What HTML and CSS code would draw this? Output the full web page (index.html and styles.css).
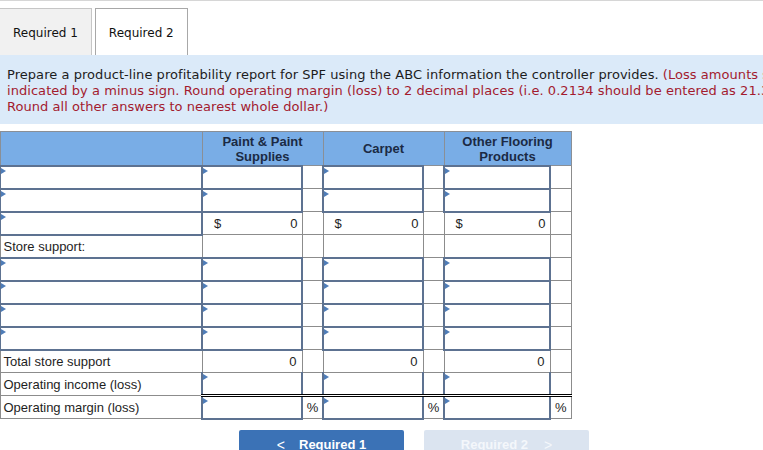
FILE: index.html
```html
<!DOCTYPE html>
<html>
<head>
<meta charset="utf-8">
<link rel="stylesheet" href="styles.css">
</head>
<body>
<div class="page">
  <div class="tabs">
    <div class="tab">Required 1</div>
    <div class="tab active">Required 2</div>
  </div>
  <div class="instr">
    Prepare a product-line profitability report for SPF using the ABC information the controller provides. <span class="red">(Loss amounts should be<br>indicated by a minus sign. Round operating margin (loss) to 2 decimal places (i.e. 0.2134 should be entered as 21.34).<br>Round all other answers to nearest whole dollar.)</span>
  </div>
  <table class="grid">
    <colgroup>
      <col class="c-label"><col class="c-val"><col class="c-s"><col class="c-val"><col class="c-s"><col class="c-val2"><col class="c-s">
    </colgroup>
    <thead>
      <tr>
        <th></th>
        <th colspan="2">Paint &amp; Paint<br>Supplies</th>
        <th colspan="2">Carpet</th>
        <th colspan="2">Other Flooring<br>Products</th>
      </tr>
    </thead>
    <tbody>
      <tr>
        <td class="in"></td>
        <td class="in"></td><td></td>
        <td class="in"></td><td></td>
        <td class="in"></td><td></td>
      </tr>
      <tr>
        <td class="in"></td>
        <td class="in"></td><td></td>
        <td class="in"></td><td></td>
        <td class="in"></td><td></td>
      </tr>
      <tr class="sum">
        <td class="in"></td>
        <td><div class="money"><span>$</span><span>0</span></div></td><td></td>
        <td><div class="money"><span>$</span><span>0</span></div></td><td></td>
        <td><div class="money"><span>$</span><span>0</span></div></td><td></td>
      </tr>
      <tr>
        <td class="lbl">Store support:</td>
        <td></td><td></td><td></td><td></td><td></td><td></td>
      </tr>
      <tr>
        <td class="in"></td>
        <td class="in"></td><td></td>
        <td class="in"></td><td></td>
        <td class="in"></td><td></td>
      </tr>
      <tr>
        <td class="in"></td>
        <td class="in"></td><td></td>
        <td class="in"></td><td></td>
        <td class="in"></td><td></td>
      </tr>
      <tr>
        <td class="in"></td>
        <td class="in"></td><td></td>
        <td class="in"></td><td></td>
        <td class="in"></td><td></td>
      </tr>
      <tr>
        <td class="in"></td>
        <td class="in"></td><td></td>
        <td class="in"></td><td></td>
        <td class="in"></td><td></td>
      </tr>
      <tr class="sum">
        <td class="lbl">Total store support</td>
        <td class="num">0</td><td></td>
        <td class="num">0</td><td></td>
        <td class="num">0</td><td></td>
      </tr>
      <tr class="sum">
        <td class="lbl">Operating income (loss)</td>
        <td class="in"></td><td></td>
        <td class="in"></td><td></td>
        <td class="in"></td><td></td>
      </tr>
      <tr class="dbl">
        <td class="lbl">Operating margin (loss)</td>
        <td class="in"></td><td class="pct">%</td>
        <td class="in"></td><td class="pct">%</td>
        <td class="in"></td><td class="pct">%</td>
      </tr>
    </tbody>
  </table>
  <div class="nav">
    <div class="btn prev"><span class="chev">&lt;</span>Required 1</div>
    <div class="btn next">Required 2<span class="chev">&gt;</span></div>
  </div>
</div>
</body>
</html>
```

FILE: styles.css
```css
html, body {
  margin: 0;
  padding: 0;
  background: #fff;
  overflow: hidden;
}
.page {
  width: 828px;
  border-top: 1px solid #d6d6d6;
  font-family: "DejaVu Sans", Verdana, sans-serif;
}
.tabs {
  display: flex;
  gap: 3px;
  padding-top: 7px;
  margin-left: -1px;
}
.tab {
  box-sizing: border-box;
  height: 47px;
  padding: 1px 13px 0 13px;
  display: flex;
  align-items: center;
  font-size: 12px;
  color: #111;
  background: #f1f1f1;
  border: 1px solid #c6c6c6;
  border-bottom: none;
}
.tab.active {
  background: #fff;
  border-color: #a8a8a8;
  width: 93px;
}
.instr {
  background: #dbeaf9;
  padding: 12px 7px 9px 7px;
  font-size: 13px;
  line-height: 16px;
  color: #1d1d1d;
  white-space: nowrap;
  letter-spacing: 0.05px;
}
.red {
  color: #a31b2f;
}
.grid {
  margin-top: 7px;
  margin-left: -1px;
  border-collapse: collapse;
  table-layout: fixed;
  width: 571px;
  font-family: "Liberation Sans", Arial, sans-serif;
  font-size: 13px;
  color: #1e1e1e;
}
.c-label { width: 202px; }
.c-val { width: 100px; }
.c-val2 { width: 106px; }
.c-s { width: 21px; }
.grid thead tr {
  height: 34px;
}
.grid tbody tr {
  height: 23px;
}
.grid th {
  background: #79ade6;
  border: 1px solid #8a8f96;
  padding: 1px 0 0 0;
  font-size: 13px;
  line-height: 15px;
  font-weight: bold;
  color: #1b2a44;
  text-align: center;
}
.grid td {
  border: 1px solid #8c8c8c;
  padding: 0;
  line-height: 15px;
  position: relative;
}
.grid td.in {
  border: 2px solid #5d7291;
}
.grid td.in::before {
  content: "";
  position: absolute;
  left: 0;
  top: 1px;
  border-left: 5px solid #4f7db8;
  border-top: 3px solid transparent;
  border-bottom: 3px solid transparent;
}
.grid td.lbl {
  padding-left: 3px;
  white-space: nowrap;
}
.money {
  display: flex;
  justify-content: space-between;
  padding: 0 4px 0 11px;
}
.grid td.num {
  text-align: right;
  padding-right: 5px;
}
.pct {
  text-align: center;
}
.sum td:not(:first-child) {
  border-top: 1px solid #000;
}
.dbl td:not(:first-child) {
  border-top: 3px double #000;
}
.nav {
  display: flex;
  justify-content: center;
  gap: 20px;
  margin-top: 10px;
}
.btn {
  width: 165px;
  height: 30px;
  border-radius: 2px;
  display: flex;
  align-items: center;
  justify-content: center;
  font-family: "Liberation Sans", Arial, sans-serif;
  font-weight: bold;
  font-size: 13px;
}
.btn.prev {
  background: #3b72b6;
  color: #fff;
}
.btn.next {
  background: #dbe4f0;
  color: #f4f7fb;
}
.prev .chev {
  margin-right: 14px;
  font-weight: normal;
  font-size: 14px;
}
.next .chev {
  margin-left: 16px;
  font-weight: normal;
  font-size: 14px;
}
```
